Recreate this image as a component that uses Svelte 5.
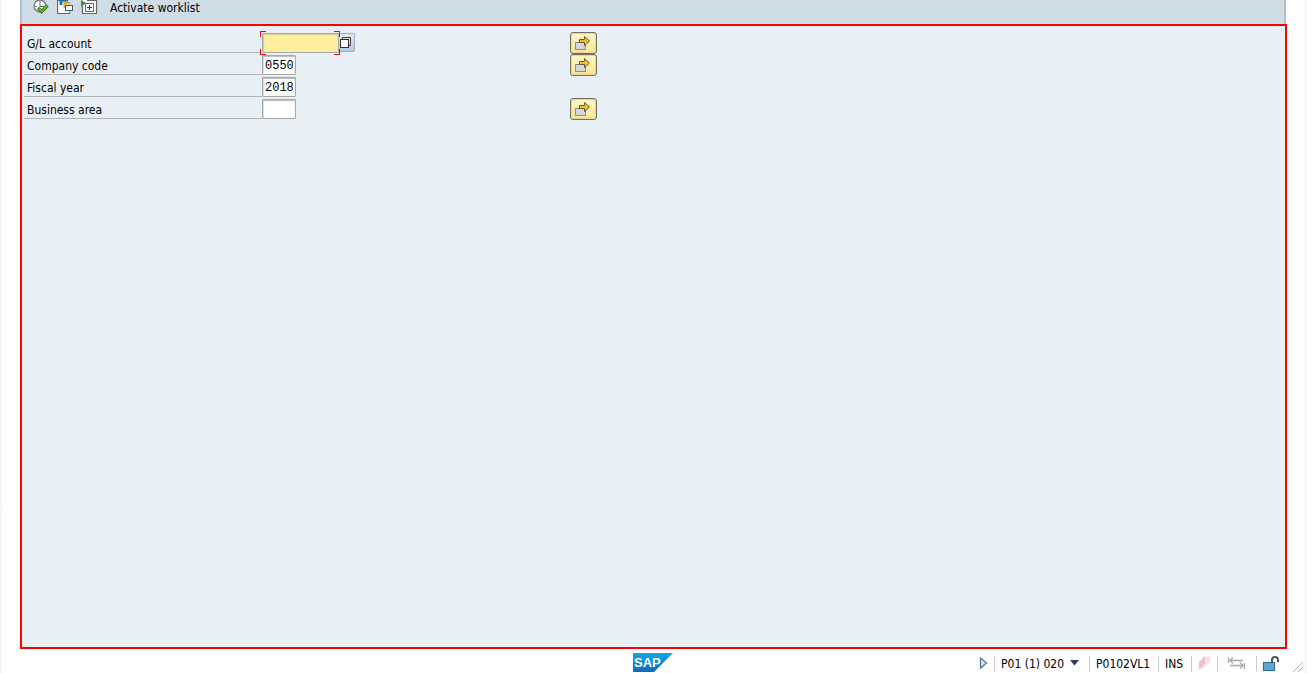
<script>
  let account = $state('');
  let company = $state('0550');
  let year = $state('2018');
  let area = $state('');
</script>

{#snippet multi(label)}
  <button class="multi" type="button" aria-label={label}>
    <svg width="17" height="15" viewBox="0 0 17 15">
      <rect x="0.5" y="6.5" width="10" height="7" fill="#d5d7da" stroke="#7c8184" />
      <path d="M0.500 6v7.500h10V10" fill="none" stroke="#6eb52c" />
      <path d="M4.500 3.500H9.500V0.500L14.500 5L9.500 9.500V6.500H4.500Z" fill="#f9bd14" stroke="#5f5b50" />
    </svg>
  </button>
{/snippet}

<div class="window">
  <header class="toolbar">
    <button class="tool" type="button" aria-label="Execute">
      <svg width="17" height="17" viewBox="0 0 17 17">
        <circle cx="7" cy="6" r="6" fill="#fff" stroke="#777" stroke-width="1.300" />
        <path d="M7 1v5.500H11M2 6.500h2M7 10v2" fill="none" stroke="#666" />
        <path d="M5 8L8.500 11.500L14.500 5.500" fill="none" stroke="#3c721e" stroke-width="3.400" />
        <path d="M5.500 8.500L8.500 11.500L14 6" fill="none" stroke="#68b52b" stroke-width="1.800" />
      </svg>
    </button>
    <button class="tool" type="button" aria-label="Get variant">
      <svg width="17" height="17" viewBox="0 0 17 17">
        <path d="M4 0H1v13h12v-2" fill="#fff" />
        <path d="M3.500 0.500H0.500v13h12v-2" fill="none" stroke="#666" stroke-width="1.200" />
        <path d="M4 5V0h7" fill="none" stroke="#1b75b5" stroke-width="3" />
        <path d="M7.500 8V3H13" fill="none" stroke="#f3a21b" stroke-width="2" />
        <rect x="8.500" y="5.500" width="7" height="5" fill="#fff" stroke="#555" />
      </svg>
    </button>
    <button class="tool" type="button" aria-label="Expand selections">
      <svg width="17" height="17" viewBox="0 0 17 17">
        <rect x="2" y="0" width="13" height="13" fill="#fff" />
        <path d="M6 0.500H15.500V13.500H1.500V6" fill="none" stroke="#666" stroke-width="1.200" />
        <rect x="4.500" y="3.500" width="8" height="8" fill="#fff" stroke="#3977ab" />
        <path d="M6 7.500h5M8.500 5v5" stroke="#17436d" />
        <path d="M0 0V7L5 3Z" fill="#498d24" />
      </svg>
    </button>
    <button class="worklist" type="button">Activate worklist</button>
  </header>

  <main>
    <form>
      <div class="row">
        <label for="account">G/L account</label>
        <div class="field">
          <span class="focus"><input id="account" class="wide" bind:value={account} /><i></i></span>
          <button class="match" type="button" aria-label="Search G/L account">
            <svg width="12" height="12" viewBox="0 0 12 12">
              <path d="M2.500 3V0.500H10.500V8.500H9" fill="#d6d6d6" stroke="#444" />
              <rect x="0.500" y="2.500" width="8" height="8" fill="#fff" stroke="#333" />
            </svg>
          </button>
        </div>
        {@render multi('Multiple selection for G/L account')}
      </div>
      <div class="row">
        <label for="company">Company code</label>
        <div class="field"><input id="company" bind:value={company} /></div>
        {@render multi('Multiple selection for company code')}
      </div>
      <div class="row">
        <label for="year">Fiscal year</label>
        <div class="field"><input id="year" bind:value={year} /></div>
      </div>
      <div class="row">
        <label for="area">Business area</label>
        <div class="field"><input id="area" bind:value={area} /></div>
        {@render multi('Multiple selection for business area')}
      </div>
    </form>
  </main>

  <footer>
    <svg class="logo" width="40" height="19" viewBox="0 0 40 19" role="img" aria-label="SAP">
      <defs>
        <linearGradient id="blue" x1="0" y1="0" x2="0" y2="1">
          <stop offset="0" stop-color="#12aae5" />
          <stop offset="1" stop-color="#1268b4" />
        </linearGradient>
      </defs>
      <path d="M0 0H40L21 19H0Z" fill="url(#blue)" />
      <text x="1" y="14" class="mark">SAP</text>
    </svg>
    <div class="status">
      <button class="expand" type="button" aria-label="Show status fields">
        <svg width="9" height="14" viewBox="0 0 9 14"><path d="M1.500 1L7.500 6L1.500 11Z" fill="#dbe8f5" stroke="#53799f" stroke-width="1.300" /></svg>
      </button>
      <button class="cell system" type="button">
        P01 (1) 020
        <svg width="9" height="10" viewBox="0 0 9 10"><path d="M0 1H9L4.500 6.500Z" fill="#2c3d69" /></svg>
      </button>
      <span class="cell server">P0102VL1</span>
      <span class="cell mode">INS</span>
      <span class="cell pink">
        <svg width="13" height="16" viewBox="0 0 13 16">
          <path d="M1 6L7 0V8L1 14Z" fill="#eebfca" /><path d="M7 1L12 0V6L4 13H2L7 8Z" fill="#f7dfe4" />
        </svg>
      </span>
      <span class="cell arrows">
        <svg width="17" height="16" viewBox="0 0 17 16" fill="none" stroke="#aaa" stroke-width="1.300">
          <path d="M0.500 1v6M1 4.500H15M5 1.500L2 4.500L5 7.500M16.500 7v6M2 9.500H16M12 6.500L15 9.500L12 12.500" />
        </svg>
      </span>
      <span class="cell lock">
        <svg width="17" height="16" viewBox="0 0 17 16">
          <path d="M9 7V4Q9 1 12 1Q15 1 15 4V6" fill="none" stroke="#555" stroke-width="2" />
          <rect x="0.500" y="6.500" width="11" height="8" fill="#64a5cb" stroke="#286a98" />
        </svg>
      </span>
      <svg class="grip" width="13" height="13" viewBox="0 0 13 13" stroke="#a7b1c0"><path d="M1 12L11 2M6 12L11 7" /></svg>
    </div>
  </footer>
</div>

<style>
  :global(body) { margin: 0; background: #fff; }
  .window {
    box-sizing: border-box;
    min-height: 100vh;
    display: flex;
    flex-direction: column;
    padding: 0 20px;
    background: linear-gradient(90deg, #f2f2f2 0, #fff 3px, #fff calc(100% - 4px), #f4f4f4 100%);
    font: 12px/16px "DejaVu Sans Condensed", "Noto Sans", sans-serif;
    color: #000;
  }
  button { font: inherit; color: inherit; padding: 0; border: 0; background: none; }
  svg { display: block; flex: none; }
  .toolbar {
    box-sizing: border-box;
    height: 24px;
    margin-right: 1px;
    display: flex;
    align-items: flex-start;
    gap: 7px;
    padding-left: 11px;
    background: #cfdde7;
    border: solid #b3bfce;
    border-width: 0 2px;
  }
  .tool { height: 17px; }
  .worklist { margin-left: 5px; }
  main {
    flex: 1;
    background: #e8f0f6;
    border: 2px solid #f00;
    padding: 6px 2px;
  }
  .row {
    display: grid;
    grid-template-columns: 238px 308px 27px;
    height: 22px;
  }
  label {
    box-sizing: border-box;
    height: 21px;
    padding: 4px 3px 0;
    border-bottom: 1px solid #b1b5b8;
  }
  .field { display: flex; align-items: flex-start; padding-top: 1px; }
  input {
    box-sizing: border-box;
    display: block;
    width: 34px;
    height: 20px;
    margin: 0;
    padding: 2px 2px 0;
    border: 1px solid #a5a9ac;
    border-radius: 1px;
    background: #fff;
    color: #000;
    outline: none;
    font: 12px/16px "Liberation Mono", monospace;
    box-shadow: inset 0 1px 1px #bbb, inset 1px 0 1px #ddd;
  }
  .wide { width: 77px; background: #ffee9e; box-shadow: inset 1px 1px 1px #d8ca8b; }
  .focus { position: relative; z-index: 1; }
  .focus::before, .focus::after, i::before, i::after {
    content: "";
    position: absolute;
    width: 5px;
    height: 5px;
    border: 0 solid #d11;
  }
  .focus::before { left: -2px; top: -2px; border-width: 1px 0 0 1px; }
  .focus::after { right: -1px; top: -2px; border-width: 1px 1px 0 0; }
  i::before { left: -2px; bottom: -2px; border-width: 0 0 1px 1px; }
  i::after { right: -1px; bottom: -2px; border-width: 0 1px 1px 0; }
  .match {
    width: 16px;
    height: 19px;
    display: flex;
    align-items: center;
    justify-content: flex-start;
    padding-left: 1px;
    border: 1px solid #a5adb8;
    border-left: 0;
    border-radius: 0 2px 2px 0;
    background: linear-gradient(#e4e8ee, #b6cae8);
  }
  .multi {
    width: 27px;
    height: 22px;
    display: flex;
    align-items: center;
    padding: 1px 0 0 4px;
    border: 1px solid #77705d;
    border-radius: 3px;
    background: linear-gradient(#fff7ca, #fae595);
    box-shadow: inset 0 0 0 1px #e6d698;
  }
  footer {
    height: 24px;
    display: grid;
    grid-template-columns: 1fr auto 1fr;
    margin-right: -18px;
  }
  .logo { grid-column: 2; margin: 4px 20px 0 0; }
  .mark { font: bold 13px "Liberation Sans", sans-serif; fill: #fff; }
  .status { display: flex; align-items: center; justify-content: flex-end; padding-top: 5px; }
  .expand { margin-right: 6px; }
  .cell {
    box-sizing: border-box;
    height: 16px;
    display: flex;
    align-items: center;
    border-left: 1px solid #ccc;
    padding-left: 6px;
    white-space: nowrap;
  }
  .system { width: 95px; gap: 6px; }
  .server { width: 69px; }
  .mode { width: 33px; }
  .pink { width: 26px; }
  .arrows { width: 39px; padding-left: 10px; }
  .lock { width: 36px; }
  .grip { align-self: flex-end; }
</style>
